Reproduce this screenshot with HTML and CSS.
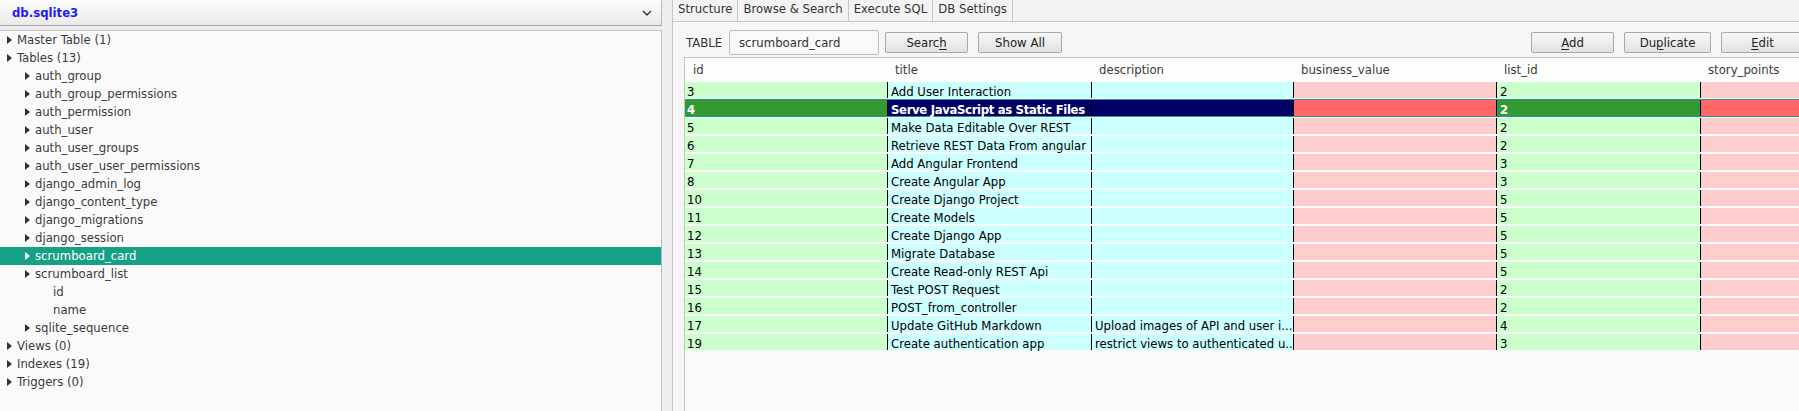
FILE: index.html
```html
<!DOCTYPE html>
<html>
<head>
<meta charset="utf-8">
<link rel="stylesheet" href="styles.css">
</head>
<body>
<div class="app">
  <aside class="left">
    <div class="dbbar">
      <span class="dbname">db.sqlite3</span>
      <svg class="chev" width="10" height="6" viewBox="0 0 10 6"><path d="M1 1 L5 5 L9 1" fill="none" stroke="#333" stroke-width="1.4"/></svg>
    </div>
    <div class="tree">
      <div class="node l0"><span class="tri"></span>Master Table (1)</div>
      <div class="node l0"><span class="tri"></span>Tables (13)</div>
      <div class="node l1"><span class="tri"></span>auth_group</div>
      <div class="node l1"><span class="tri"></span>auth_group_permissions</div>
      <div class="node l1"><span class="tri"></span>auth_permission</div>
      <div class="node l1"><span class="tri"></span>auth_user</div>
      <div class="node l1"><span class="tri"></span>auth_user_groups</div>
      <div class="node l1"><span class="tri"></span>auth_user_user_permissions</div>
      <div class="node l1"><span class="tri"></span>django_admin_log</div>
      <div class="node l1"><span class="tri"></span>django_content_type</div>
      <div class="node l1"><span class="tri"></span>django_migrations</div>
      <div class="node l1"><span class="tri"></span>django_session</div>
      <div class="node l1 sel"><span class="tri"></span>scrumboard_card</div>
      <div class="node l1"><span class="tri"></span>scrumboard_list</div>
      <div class="node l2">id</div>
      <div class="node l2">name</div>
      <div class="node l1"><span class="tri"></span>sqlite_sequence</div>
      <div class="node l0"><span class="tri"></span>Views (0)</div>
      <div class="node l0"><span class="tri"></span>Indexes (19)</div>
      <div class="node l0"><span class="tri"></span>Triggers (0)</div>
    </div>
  </aside>
  <div class="split"></div>
  <main class="right">
    <div class="tabs">
      <div class="tab">Structure</div>
      <div class="tab">Browse &amp; Search</div>
      <div class="tab">Execute SQL</div>
      <div class="tab">DB Settings</div>
    </div>
    <div class="panel">
      <div class="toolbar">
        <span class="lbl">TABLE</span>
        <div class="input">scrumboard_card</div>
        <button class="btn w83">Searc<u>h</u></button>
        <button class="btn w84">Show All</button>
        <div class="spacer"></div>
        <button class="btn w83"><u>A</u>dd</button>
        <button class="btn w87">Du<u>p</u>licate</button>
        <button class="btn w83"><u>E</u>dit</button>
      </div>
      <div class="grid">
        <div class="ghead">
          <div class="hc">id</div><div class="hc">title</div><div class="hc">description</div><div class="hc">business_value</div><div class="hc">list_id</div><div class="hc">story_points</div>
        </div>
        <div class="rows">
          <div class="row"><div class="c cid">3</div><div class="c ctx">Add User Interaction</div><div class="c ctx"></div><div class="c cbv"></div><div class="c cli">2</div><div class="c csp"></div></div>
          <div class="row sel"><div class="c cid">4</div><div class="c ctx">Serve JavaScript as Static Files</div><div class="c ctx"></div><div class="c cbv"></div><div class="c cli">2</div><div class="c csp"></div></div>
          <div class="row"><div class="c cid">5</div><div class="c ctx">Make Data Editable Over REST</div><div class="c ctx"></div><div class="c cbv"></div><div class="c cli">2</div><div class="c csp"></div></div>
          <div class="row"><div class="c cid">6</div><div class="c ctx">Retrieve REST Data From angular</div><div class="c ctx"></div><div class="c cbv"></div><div class="c cli">2</div><div class="c csp"></div></div>
          <div class="row"><div class="c cid">7</div><div class="c ctx">Add Angular Frontend</div><div class="c ctx"></div><div class="c cbv"></div><div class="c cli">3</div><div class="c csp"></div></div>
          <div class="row"><div class="c cid">8</div><div class="c ctx">Create Angular App</div><div class="c ctx"></div><div class="c cbv"></div><div class="c cli">3</div><div class="c csp"></div></div>
          <div class="row"><div class="c cid">10</div><div class="c ctx">Create Django Project</div><div class="c ctx"></div><div class="c cbv"></div><div class="c cli">5</div><div class="c csp"></div></div>
          <div class="row"><div class="c cid">11</div><div class="c ctx">Create Models</div><div class="c ctx"></div><div class="c cbv"></div><div class="c cli">5</div><div class="c csp"></div></div>
          <div class="row"><div class="c cid">12</div><div class="c ctx">Create Django App</div><div class="c ctx"></div><div class="c cbv"></div><div class="c cli">5</div><div class="c csp"></div></div>
          <div class="row"><div class="c cid">13</div><div class="c ctx">Migrate Database</div><div class="c ctx"></div><div class="c cbv"></div><div class="c cli">5</div><div class="c csp"></div></div>
          <div class="row"><div class="c cid">14</div><div class="c ctx">Create Read-only REST Api</div><div class="c ctx"></div><div class="c cbv"></div><div class="c cli">5</div><div class="c csp"></div></div>
          <div class="row"><div class="c cid">15</div><div class="c ctx">Test POST Request</div><div class="c ctx"></div><div class="c cbv"></div><div class="c cli">2</div><div class="c csp"></div></div>
          <div class="row"><div class="c cid">16</div><div class="c ctx">POST_from_controller</div><div class="c ctx"></div><div class="c cbv"></div><div class="c cli">2</div><div class="c csp"></div></div>
          <div class="row"><div class="c cid">17</div><div class="c ctx">Update GitHub Markdown</div><div class="c ctx">Upload images of API and user i...</div><div class="c cbv"></div><div class="c cli">4</div><div class="c csp"></div></div>
          <div class="row"><div class="c cid">19</div><div class="c ctx">Create authentication app</div><div class="c ctx">restrict views to authenticated u...</div><div class="c cbv"></div><div class="c cli">3</div><div class="c csp"></div></div>
        </div>
      </div>
    </div>
  </main>
</div>
</body>
</html>
```

FILE: styles.css
```css
* { box-sizing: border-box; }
html, body {
  margin: 0;
  padding: 0;
  height: 411px;
  overflow: hidden;
}
body {
  font-family: "DejaVu Sans Condensed", "DejaVu Sans", sans-serif;
  font-stretch: semi-condensed;
  font-size: 13px;
  color: #333;
  background: #efefef;
}
.app {
  display: flex;
  height: 411px;
}

/* left side */
.left {
  width: 662px;
  flex: none;
  display: flex;
  flex-direction: column;
}
.dbbar {
  height: 26px;
  flex: none;
  display: flex;
  align-items: center;
  justify-content: space-between;
  padding: 0 9px 0 12px;
  background: linear-gradient(#fdfdfd, #e9e9e9);
  border-bottom: 1px solid #a9a9a9;
  border-right: 1px solid #b9b9b9;
}
.dbname {
  color: #1c1cf0;
  font-weight: bold;
  margin-top: -1px;
}
.chev { display: block; }
.tree {
  margin-top: 4px;
  flex: 1;
  background: #fafafa;
  border-top: 1px solid #c3c3c3;
  border-right: 1px solid #bdbdbd;
  color: #3a3a3a;
}
.node {
  height: 18px;
  line-height: 18px;
  display: flex;
  align-items: center;
  white-space: nowrap;
}
.node.l0 { padding-left: 7px; }
.node.l1 { padding-left: 25px; }
.node.l2 { padding-left: 53px; }
.tri {
  width: 0;
  height: 0;
  border-left: 5px solid #333;
  border-top: 4px solid transparent;
  border-bottom: 4px solid transparent;
  margin-right: 5px;
}
.node.sel {
  background: #16a086;
  color: #fff;
}
.node.sel .tri { border-left-color: #fff; }

.split {
  width: 10px;
  flex: none;
  background: #efefef;
}

/* right side */
.right {
  flex: 1;
  min-width: 0;
  display: flex;
  flex-direction: column;
  overflow: hidden;
}
.tabs {
  height: 22px;
  flex: none;
  display: flex;
  background: #f3f3f3;
  border-bottom: 1px solid #c7c7c7;
}
.tab {
  height: 21px;
  padding: 0 5px;
  line-height: 18px;
  background: #f3f3f3;
  border-right: 1px solid #c7c7c7;
  color: #333;
  white-space: nowrap;
}
.tab:first-child { border-left: 1px solid #c7c7c7; }
.panel {
  flex: 1;
  display: flex;
  flex-direction: column;
  background: #f6f6f6;
  border-left: 1px solid #c7c7c7;
  padding: 8px 0 0 11px;
  min-height: 0;
}
.toolbar {
  height: 25px;
  flex: none;
  display: flex;
  align-items: center;
  white-space: nowrap;
}
.lbl {
  flex: none;
  margin-left: 2px;
  width: 43px;
  color: #333;
}
.input {
  width: 150px;
  height: 25px;
  line-height: 24px;
  padding-left: 9px;
  background: #f9f9f9;
  border: 1px solid #bdbdbd;
  border-radius: 2px;
  color: #333;
  margin-right: 6px;
  flex: none;
}
.btn {
  height: 21px;
  font: inherit;
  font-stretch: semi-condensed;
  color: #222;
  background: linear-gradient(#f7f7f7, #e2e2e2);
  border: 1px solid #a9a9a9;
  border-radius: 2px;
  padding: 0;
  margin-right: 10px;
  line-height: 19px;
  flex: none;
}
.btn u { text-underline-offset: 2px; }
.w83 { width: 83px; }
.w84 { width: 84px; }
.w87 { width: 87px; }
.spacer { flex: none; width: 459px; }

.grid {
  margin-top: 2px;
  flex: 1;
  background: #fafafa;
  border-top: 1px solid #c5c5c5;
  border-left: 1px solid #c5c5c5;
  overflow: hidden;
}
.ghead, .row {
  display: grid;
  grid-template-columns: 202px 204px 202px 203px 204px 204px;
}
.ghead {
  height: 24px;
  background: #fdfdfd;
  color: #3a3a3a;
}
.hc {
  padding-left: 8px;
  line-height: 24px;
  white-space: nowrap;
}
.rows {
  display: flex;
  flex-direction: column;
  gap: 2px;
}
.row {
  height: 16px;
  color: #000;
}
.c {
  height: 16px;
  line-height: 16px;
  padding: 2px 0 0 3px;
  white-space: nowrap;
  border-left: 1px solid #000;
}
.c.cid {
  border-left: none;
  padding-left: 2px;
}
.cid, .cli { background: #ccffcc; }
.ctx { background: #ccffff; }
.cbv, .csp { background: #ffcccc; }
.row.sel {
  color: #fff;
  font-weight: bold;
  letter-spacing: -0.35px;
  box-shadow: 0 -1px 0 #1f9a8a, 0 1px 0 #1f9a8a;
}
.row.sel .cid, .row.sel .cli { background: #339933; }
.row.sel .ctx { background: #000066; }
.row.sel .cbv, .row.sel .csp { background: #ff6666; }
```
